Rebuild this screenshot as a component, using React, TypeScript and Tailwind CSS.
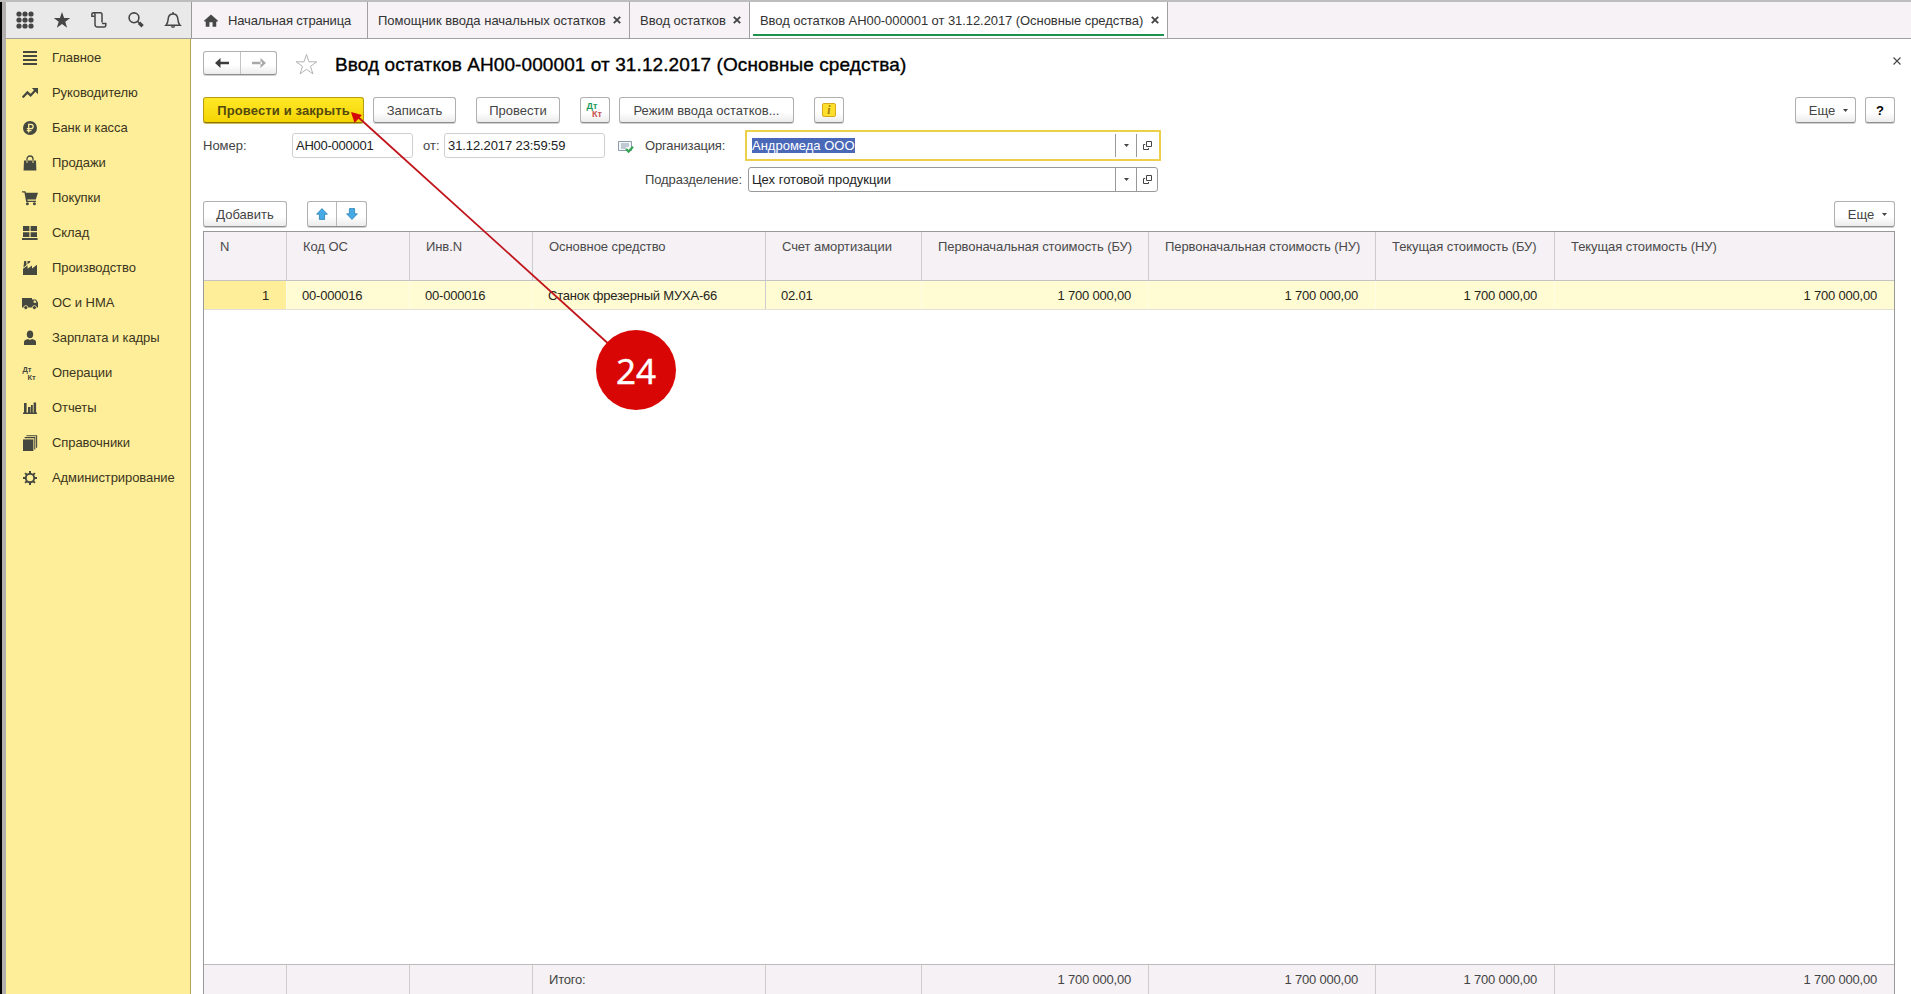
import React from 'react';
import clsx from 'clsx';

const HomeIcon = () => (
  <svg width="14" height="13" viewBox="0 0 16 14" fill="#474747">
    <path d="M8 0 L16 7.4 L14.8 8.6 L14 7.9 V14 H9.8 V9 H6.2 V14 H2 V7.9 L1.2 8.6 L0 7.4 Z" />
  </svg>
);

const toolIcons: React.ReactNode[] = [
  <svg key="grid" width="18" height="18" viewBox="0 0 18 18" fill="#454545">
    {[3, 9, 15].map((y) => [3, 9, 15].map((x) => <circle key={`${x}-${y}`} cx={x} cy={y} r="2.6" />))}
  </svg>,
  <svg key="star" width="18" height="18" viewBox="0 0 18 18" fill="#454545">
    <path d="M9 1 L11.1 7 H17.2 L12.3 10.7 L14.1 16.7 L9 13.1 L3.9 16.7 L5.7 10.7 L0.8 7 H6.9 Z" />
  </svg>,
  <svg key="history" width="18" height="18" viewBox="0 0 18 18" fill="none" stroke="#454545" strokeWidth="1.5">
    <path d="M4.5 5.2 H1.9 V3.4 C1.9 2.2 2.5 1.7 3.4 1.7 H10.4 C11.6 1.7 12 2.5 12 3.6 V11.5" />
    <path d="M3.6 1.7 C4.7 1.7 5 2.5 5 3.4 V13.6 C5 15.3 5.8 15.9 7 15.9 H14.2 C15.4 15.9 15.8 15 15.8 13.9 V12.6 H12" />
  </svg>,
  <svg key="search" width="18" height="18" viewBox="0 0 18 18" fill="none" stroke="#454545">
    <circle cx="7" cy="6.8" r="4.9" strokeWidth="1.6" />
    <path d="M10.6 10.4 L12.3 12" strokeWidth="1.6" />
    <path d="M12 11.8 L15.6 15.2" strokeWidth="3.4" />
  </svg>,
  <svg key="bell" width="18" height="18" viewBox="0 0 18 18" fill="none" stroke="#454545" strokeWidth="1.5">
    <path d="M2 14.2 C4 12.4 4 10.6 4.2 7.6 C4.5 4.6 6.3 2.9 9 2.9 C11.7 2.9 13.5 4.6 13.8 7.6 C14 10.6 14 12.4 16 14.2 Z" />
    <path d="M9 1 V3" />
    <path d="M6.8 15.2 C7.2 17.3 10.8 17.3 11.2 15.2 Z" fill="#454545" stroke="none" />
  </svg>,
];

const menu: { title: string; icon: React.ReactNode }[] = [
  { title: 'Главное', icon: <path d="M1 1h14v2H1zM1 5h14v2H1zM1 9h14v2H1zM1 13h14v2H1z" /> },
  {
    title: 'Руководителю',
    icon: (
      <>
        <path d="M0.6 12.4 L5.4 7.4 L8.6 10.4 L13.4 5.2" fill="none" stroke="#45483f" strokeWidth="2.2" />
        <path d="M9.8 3 H16 V9.2 Z" />
      </>
    ),
  },
  {
    title: 'Банк и касса',
    icon: (
      <>
        <circle cx="8" cy="8" r="7" />
        <path d="M6.7 12.6 V4.4 H9 C11.9 4.4 11.9 8.7 9 8.7 H4.8 M4.8 10.7 H9.4" fill="none" stroke="#ffee99" strokeWidth="1.3" />
      </>
    ),
  },
  {
    title: 'Продажи',
    icon: (
      <>
        <path d="M2 5.5 H14 L14.4 15.5 H1.6 Z" />
        <path d="M5 5.5 V4 C5 0 11 0 11 4 V5.5" fill="none" stroke="#45483f" strokeWidth="1.3" />
        <path d="M5 5.5 V8 M11 5.5 V8" stroke="#ffee99" strokeWidth="0.9" />
      </>
    ),
  },
  {
    title: 'Покупки',
    icon: (
      <>
        <path d="M0 1.2 H3.4 L4 2.8 H16 L13.8 9.4 H5.3 L5.7 10.8 H14 V12 H4.2 L2.4 2.6 H0 Z" />
        <circle cx="5.4" cy="13.8" r="1.5" />
        <circle cx="12.4" cy="13.8" r="1.5" />
      </>
    ),
  },
  { title: 'Склад', icon: <path d="M1 1h6.4v5H1zM8.6 1H15v5H8.6zM1 7.2h6.4v4.8H1zM8.6 7.2H15v4.8H8.6zM0 13h15.6v2H0z" /> },
  { title: 'Производство', icon: <path d="M1 15 V8.8 L5.6 5.6 V8.8 L10 5.6 V8.6 L15 4.8 V15 Z M1.4 7.4 L2.2 1 H4.2 L4.6 5 Z M5.4 4.2 L5.6 1 H8.4 L8 2.4 Z" /> },
  {
    title: 'ОС и НМА',
    icon: (
      <>
        <path d="M0 3 H10 V12.4 H0 Z M10 4.4 H14 L16 7.6 V12.4 H10 Z" />
        <path d="M11.6 5.6 H13.4 L14.6 7.8 H11.6 Z" fill="#ffee99" />
        <circle cx="3.8" cy="12.6" r="2" stroke="#ffee99" strokeWidth="0.8" />
        <circle cx="12.4" cy="12.6" r="2" stroke="#ffee99" strokeWidth="0.8" />
      </>
    ),
  },
  {
    title: 'Зарплата и кадры',
    icon: (
      <>
        <ellipse cx="8" cy="4.3" rx="3.2" ry="3.9" />
        <path d="M2 15 V12 C2 10.2 4 9.4 6 9 L8 10 L10 9 C12 9.4 14 10.2 14 12 V15 Z" />
      </>
    ),
  },
  {
    title: 'Операции',
    icon: (
      <g className="text-[7.5px] font-bold">
        <text x="0.5" y="6.5">Дт</text>
        <text x="5.5" y="14.8">Кт</text>
      </g>
    ),
  },
  { title: 'Отчеты', icon: <path d="M2 3h2.6v10H2zM6 7h2.4v6H6zM8.9 5h1.9v8H8.9zM11.6 2.4h2.5V13h-2.5zM1 12.4h14V14H1z" /> },
  {
    title: 'Справочники',
    icon: (
      <>
        <path d="M1 4.4h10.4V16H1z" />
        <path d="M2.6 2.6 H12.8 V14.4 M4.4 0.8 H14.6 V12.8" fill="none" stroke="#45483f" strokeWidth="1.1" />
      </>
    ),
  },
  {
    title: 'Администрирование',
    icon: (
      <g fill="none" stroke="#45483f">
        <circle cx="8" cy="8" r="4.2" strokeWidth="1.9" />
        <path
          d="M8 1V3.6M8 12.4V15M1 8H3.6M12.4 8H15M3.1 3.1L4.9 4.9M11.1 11.1L12.9 12.9M3.1 12.9L4.9 11.1M11.1 4.9L12.9 3.1"
          strokeWidth="2"
        />
      </g>
    ),
  },
];

const CloseMark = () => (
  <svg width="8" height="8" viewBox="0 0 8 8" stroke="#454545" strokeWidth="1.9">
    <path d="M0.8 0.8 L7.2 7.2 M7.2 0.8 L0.8 7.2" />
  </svg>
);

const Caret = () => (
  <svg width="5" height="3" viewBox="0 0 5 3" fill="#444">
    <path d="M0 0H5L2.5 3Z" />
  </svg>
);

const OpenIcon = () => (
  <svg width="9" height="9" viewBox="0 0 9 9" fill="none" stroke="#444">
    <path d="M3.5 0.5H8.5V5.5H3.5Z M2.2 3.5H0.5V8.5H5.5V7" />
  </svg>
);

const BUTTON =
  'flex h-[26px] items-center justify-center rounded-[3px] border border-[#b0b0b0] border-b-[#8e8e8e] bg-linear-to-b from-white from-60% to-[#ececec] text-[#444] shadow-[0_1px_0_#d0d0d0]';

const Button = ({ className, children }: { className?: string; children: React.ReactNode }) => (
  <button className={clsx(BUTTON, className)}>{children}</button>
);

const MoreButton = () => (
  <Button className="w-[61px] gap-2 pl-[6px]">
    <span>Еще</span>
    <Caret />
  </Button>
);

const columns = [
  { title: 'N', width: 'w-[83px]', value: '1', total: '', right: true },
  { title: 'Код ОС', width: 'w-[123px]', value: '00-000016', total: '' },
  { title: 'Инв.N', width: 'w-[123px]', value: '00-000016', total: '' },
  { title: 'Основное средство', width: 'w-[233px]', value: 'Станок фрезерный МУХА-66', total: 'Итого:' },
  { title: 'Счет амортизации', width: 'w-[156px]', value: '02.01', total: '' },
  { title: 'Первоначальная стоимость (БУ)', width: 'w-[227px]', value: '1 700 000,00', total: '1 700 000,00', right: true },
  { title: 'Первоначальная стоимость (НУ)', width: 'w-[227px]', value: '1 700 000,00', total: '1 700 000,00', right: true },
  { title: 'Текущая стоимость (БУ)', width: 'w-[179px]', value: '1 700 000,00', total: '1 700 000,00', right: true },
  { title: 'Текущая стоимость (НУ)', width: 'w-[339px]', value: '1 700 000,00', total: '1 700 000,00', right: true },
];

const tabs = [
  { title: 'Помощник ввода начальных остатков', width: 'w-[262px]' },
  { title: 'Ввод остатков', width: 'w-[120px]' },
  { title: 'Ввод остатков АН00-000001 от 31.12.2017 (Основные средства)', width: 'w-[418px]', active: true },
];

const TopBar = () => (
  <header className="flex h-[37px] shrink-0 border-b border-[#a0a0a0] bg-[#f6f2f6] text-[#333]">
    <div className="flex w-[186px] items-center gap-[19px] border-r border-[#999] bg-[#e9e9e9] pl-[10px]">
      {toolIcons}
    </div>
    <div className="flex w-[176px] items-center border-r border-[#a0a0a0] pl-[12px]">
      <HomeIcon />
      <span className="ml-[10px] tracking-[-0.15px]">Начальная страница</span>
    </div>
    {tabs.map((tab) => (
      <div
        key={tab.title}
        className={clsx('flex flex-col border-r border-[#a0a0a0]', tab.width, tab.active && 'bg-white')}
      >
        <div className="flex grow items-center justify-between pr-[8px] pl-[10px]">
          <span className={clsx('whitespace-nowrap', tab.active && 'tracking-[-0.07px]')}>{tab.title}</span>
          <CloseMark />
        </div>
        {tab.active && <div className="-mt-[4px] mr-[3px] mb-[2px] ml-[3px] h-[2px] bg-[#1f9250]" />}
      </div>
    ))}
  </header>
);

const Sidebar = () => (
  <nav className="w-[185px] shrink-0 border-r border-[#b5a452] bg-[#ffee99] pt-px text-[#3a3520]">
    {menu.map((item) => (
      <div key={item.title} className="flex h-[35px] items-center pl-4">
        <svg width="16" height="16" viewBox="0 0 16 16" fill="#45483f">
          {item.icon}
        </svg>
        <span className="ml-[14px] tracking-[-0.08px] whitespace-nowrap">{item.title}</span>
      </div>
    ))}
  </nav>
);

const FieldButtons = () => (
  <>
    <span className="flex w-[21px] items-center justify-center self-stretch border-l border-[#999]">
      <Caret />
    </span>
    <span className="flex w-[21px] items-center justify-center self-stretch border-l border-[#999]">
      <OpenIcon />
    </span>
  </>
);

const DocumentForm = () => (
  <>
    <div className="mt-[12px] flex h-[24px] items-center">
      <div className="flex h-[24px] w-[74px] rounded-[3px] border border-[#b0b0b0] border-b-[#8e8e8e] bg-linear-to-b from-white from-60% to-[#ececec] shadow-[0_1px_0_#d0d0d0]">
        <span className="flex w-[37px] items-center justify-center border-r border-[#c4c4c4]">
          <svg width="14" height="10" viewBox="0 0 14 10" fill="#3c3c3c">
            <path d="M0 5 L5.5 0 V10 Z M4 3.8H14V6.2H4Z" />
          </svg>
        </span>
        <span className="flex grow items-center justify-center">
          <svg width="14" height="10" viewBox="0 0 14 10" fill="#a8a8a8">
            <path d="M14 5 L8.5 0 V10 Z M0 3.8H10V6.2H0Z" />
          </svg>
        </span>
      </div>
      <svg className="mt-[2px] ml-[18px]" width="23" height="23" viewBox="0 0 24 24" fill="white" stroke="#b0b0b0">
        <path d="M12 1.5 L14.6 9.2 H22.8 L16.2 13.9 L18.7 21.8 L12 17 L5.3 21.8 L7.8 13.9 L1.2 9.2 H9.4 Z" />
      </svg>
      <h1 className="mt-[2px] ml-[17px] text-[19px] tracking-[0.09px] whitespace-nowrap text-black [-webkit-text-stroke:0.35px_black]">
        Ввод остатков АН00-000001 от 31.12.2017 (Основные средства)
      </h1>
      <svg className="mr-[-6px] mb-[5px] ml-auto" width="8" height="8" viewBox="0 0 8 8" stroke="#444" strokeWidth="1.1">
        <path d="M0.5 0.5 L7.5 7.5 M7.5 0.5 L0.5 7.5" />
      </svg>
    </div>

    <div className="mt-[22px] flex">
      <button className="flex h-[26px] w-[161px] items-center justify-center rounded-[3px] border border-[#b79b10] border-b-[#8c7500] bg-linear-to-b from-[#ffe924] to-[#f5d400] font-bold tracking-[0.12px] whitespace-nowrap text-[#54490c] shadow-[0_1px_0_#c8b860]">
        Провести и закрыть
      </button>
      <Button className="ml-[9px] w-[83px]">Записать</Button>
      <Button className="ml-[20px] w-[84px]">Провести</Button>
      <Button className="ml-[20px] w-[30px]">
        <svg width="18" height="18" viewBox="0 0 18 18" className="text-[9px] font-bold">
          <text x="0.5" y="7.5" fill="#1c9a5c">Дт</text>
          <text x="6" y="15.5" fill="#c85050">Кт</text>
        </svg>
      </Button>
      <Button className="ml-[9px] w-[175px]">Режим ввода остатков...</Button>
      <Button className="ml-[20px] w-[30px]">
        <span className="flex h-[14px] w-[14px] items-center justify-center rounded-[2px] border border-[#d9a91c] bg-[#ffdf2e] font-['Liberation_Serif'] text-[12px] leading-none font-bold text-[#a07c10] italic">
          i
        </span>
      </Button>
      <div className="ml-auto flex gap-[9px]">
        <MoreButton />
        <Button className="w-[30px] font-bold text-black">?</Button>
      </div>
    </div>

    <div className="mt-[7px] flex h-[31px] items-center text-[#444]">
      <span className="w-[89px]">Номер:</span>
      <div className="flex h-[25px] w-[121px] items-center rounded-[3px] border border-[#cfcfcf] pl-[3px] tracking-[-0.25px] text-[#222]">
        АН00-000001
      </div>
      <span className="ml-[10px] w-[21px]">от:</span>
      <div className="flex h-[25px] w-[161px] items-center rounded-[3px] border border-[#cfcfcf] pl-[3px] tracking-[-0.1px] text-[#222]">
        31.12.2017 23:59:59
      </div>
      <svg className="mt-[3px] ml-[13px]" width="16" height="14" viewBox="0 0 16 14" fill="none">
        <path d="M0.5 1.5H13.5V10.5H0.5Z" fill="#f4f7fa" stroke="#8b9aa8" />
        <path d="M3 4H11M3 6H11M3 8H8" stroke="#8b9aa8" />
        <path d="M8 9 L10.6 11.6 L15 6.8" stroke="#35a356" strokeWidth="2.2" />
      </svg>
      <span className="ml-[11px] w-[100px] tracking-[-0.15px]">Организация:</span>
      <div className="flex h-[31px] w-[416px] items-center border-2 border-[#ecd04c] bg-white py-[2px] pr-[2px] pl-[5px]">
        <span className="bg-[#4a68b8] text-white">Андромеда ООО</span>
        <span className="grow" />
        <FieldButtons />
      </div>
    </div>

    <div className="mt-[6px] flex h-[25px] items-center pl-[442px] text-[#444]">
      <span className="w-[103px] tracking-[-0.1px] whitespace-nowrap">Подразделение:</span>
      <div className="flex h-[25px] w-[410px] items-center rounded-[3px] border border-[#999] bg-white pl-[3px] text-[#222]">
        <span className="grow">Цех готовой продукции</span>
        <FieldButtons />
      </div>
    </div>
  </>
);

const AssetTable = () => (
  <div className="mt-[4px] flex grow flex-col border-x border-t border-[#999]">
    <div className="flex h-[49px] shrink-0 border-b border-[#c4c4c4] bg-[#f5f1f5] tracking-[-0.08px] text-[#4a4a4a]">
      {columns.map((col) => (
        <div key={col.title} className={clsx('shrink-0 border-r border-[#ccc] pt-[7px] pl-4 whitespace-nowrap last:border-r-0', col.width)}>
          {col.title}
        </div>
      ))}
    </div>
    <div className="flex h-[29px] shrink-0 items-stretch border-b border-[#e2e0d8] bg-[#fffbd2] tracking-[-0.2px] text-[#26251a]">
      {columns.map((col, i) => (
        <div
          key={col.title}
          className={clsx(
            'flex shrink-0 items-center border-r pr-[17px] pl-[15px] whitespace-nowrap last:border-r-0',
            col.width,
            col.right && 'justify-end',
            i === 0 && 'bg-[#ffee99]',
            i === 3 ? 'border-[#ccc] pl-4' : 'border-[#fffde6]'
          )}
        >
          {col.value}
        </div>
      ))}
    </div>
    <div className="grow" />
    <div className="flex h-[30px] shrink-0 border-t border-[#bbb] bg-[#f5f1f5] tracking-[-0.2px] text-[#444]">
      {columns.map((col) => (
        <div
          key={col.title}
          className={clsx('flex shrink-0 items-center border-r border-[#ccc] pr-[17px] pl-4 last:border-r-0', col.width, col.right && 'justify-end')}
        >
          {col.total}
        </div>
      ))}
    </div>
  </div>
);

// Numbered hint with an arrow to the main button
const StepHint = () => (
  <svg className="pointer-events-none absolute top-[98px] left-[340px]" width="340" height="320" viewBox="340 100 340 320">
    <path d="M358 117 L612 347" stroke="#c0151b" strokeWidth="1.8" />
    <path d="M351 112 L362 115 L354.5 123 Z" fill="#d40a0a" />
    <circle cx="636" cy="370" r="40" fill="#d90606" />
    <text x="636" y="384" textAnchor="middle" fill="white" stroke="white" strokeWidth="0.5" className="font-['Open_Sans'] text-[35px]">
      24
    </text>
  </svg>
);

const App: React.FC = () => {
  return (
    <div className="relative flex h-screen w-full flex-col overflow-hidden border-t-2 border-[#bdbdbd] bg-white font-['Liberation_Sans',sans-serif] text-[13px] leading-[15px]">
      <div className="flex min-h-0 grow">
        <div className="w-[2px] shrink-0 bg-black" />
        <div className="w-[4px] shrink-0 bg-[#b3aeae]" />
        <div className="flex min-w-0 grow flex-col">
          <TopBar />
          <div className="flex min-h-0 grow">
            <Sidebar />
            <main className="flex min-w-0 grow flex-col pr-4 pl-[12px]">
              <DocumentForm />
              <div className="mt-[9px] flex">
                <Button className="w-[84px]">Добавить</Button>
                <div className="ml-[20px] flex h-[26px] w-[60px] rounded-[3px] border border-[#b0b0b0] border-b-[#8e8e8e] bg-linear-to-b from-white from-60% to-[#ececec] shadow-[0_1px_0_#d0d0d0]">
                  <span className="flex w-[29px] items-center justify-center border-r border-[#b8b8b8]">
                    <svg width="12" height="12" viewBox="0 0 12 12" fill="#45aae6" stroke="#2c7fb4" strokeWidth="0.8">
                      <path d="M6 0.6 L11.4 6.2 H8.6 V11.4 H3.4 V6.2 H0.6 Z" />
                    </svg>
                  </span>
                  <span className="flex grow items-center justify-center">
                    <svg width="12" height="12" viewBox="0 0 12 12" fill="#45aae6" stroke="#2c7fb4" strokeWidth="0.8">
                      <path d="M6 11.4 L11.4 5.8 H8.6 V0.6 H3.4 V5.8 H0.6 Z" />
                    </svg>
                  </span>
                </div>
                <div className="ml-auto">
                  <MoreButton />
                </div>
              </div>
              <AssetTable />
            </main>
          </div>
        </div>
      </div>
      <StepHint />
    </div>
  );
};

export default App;
